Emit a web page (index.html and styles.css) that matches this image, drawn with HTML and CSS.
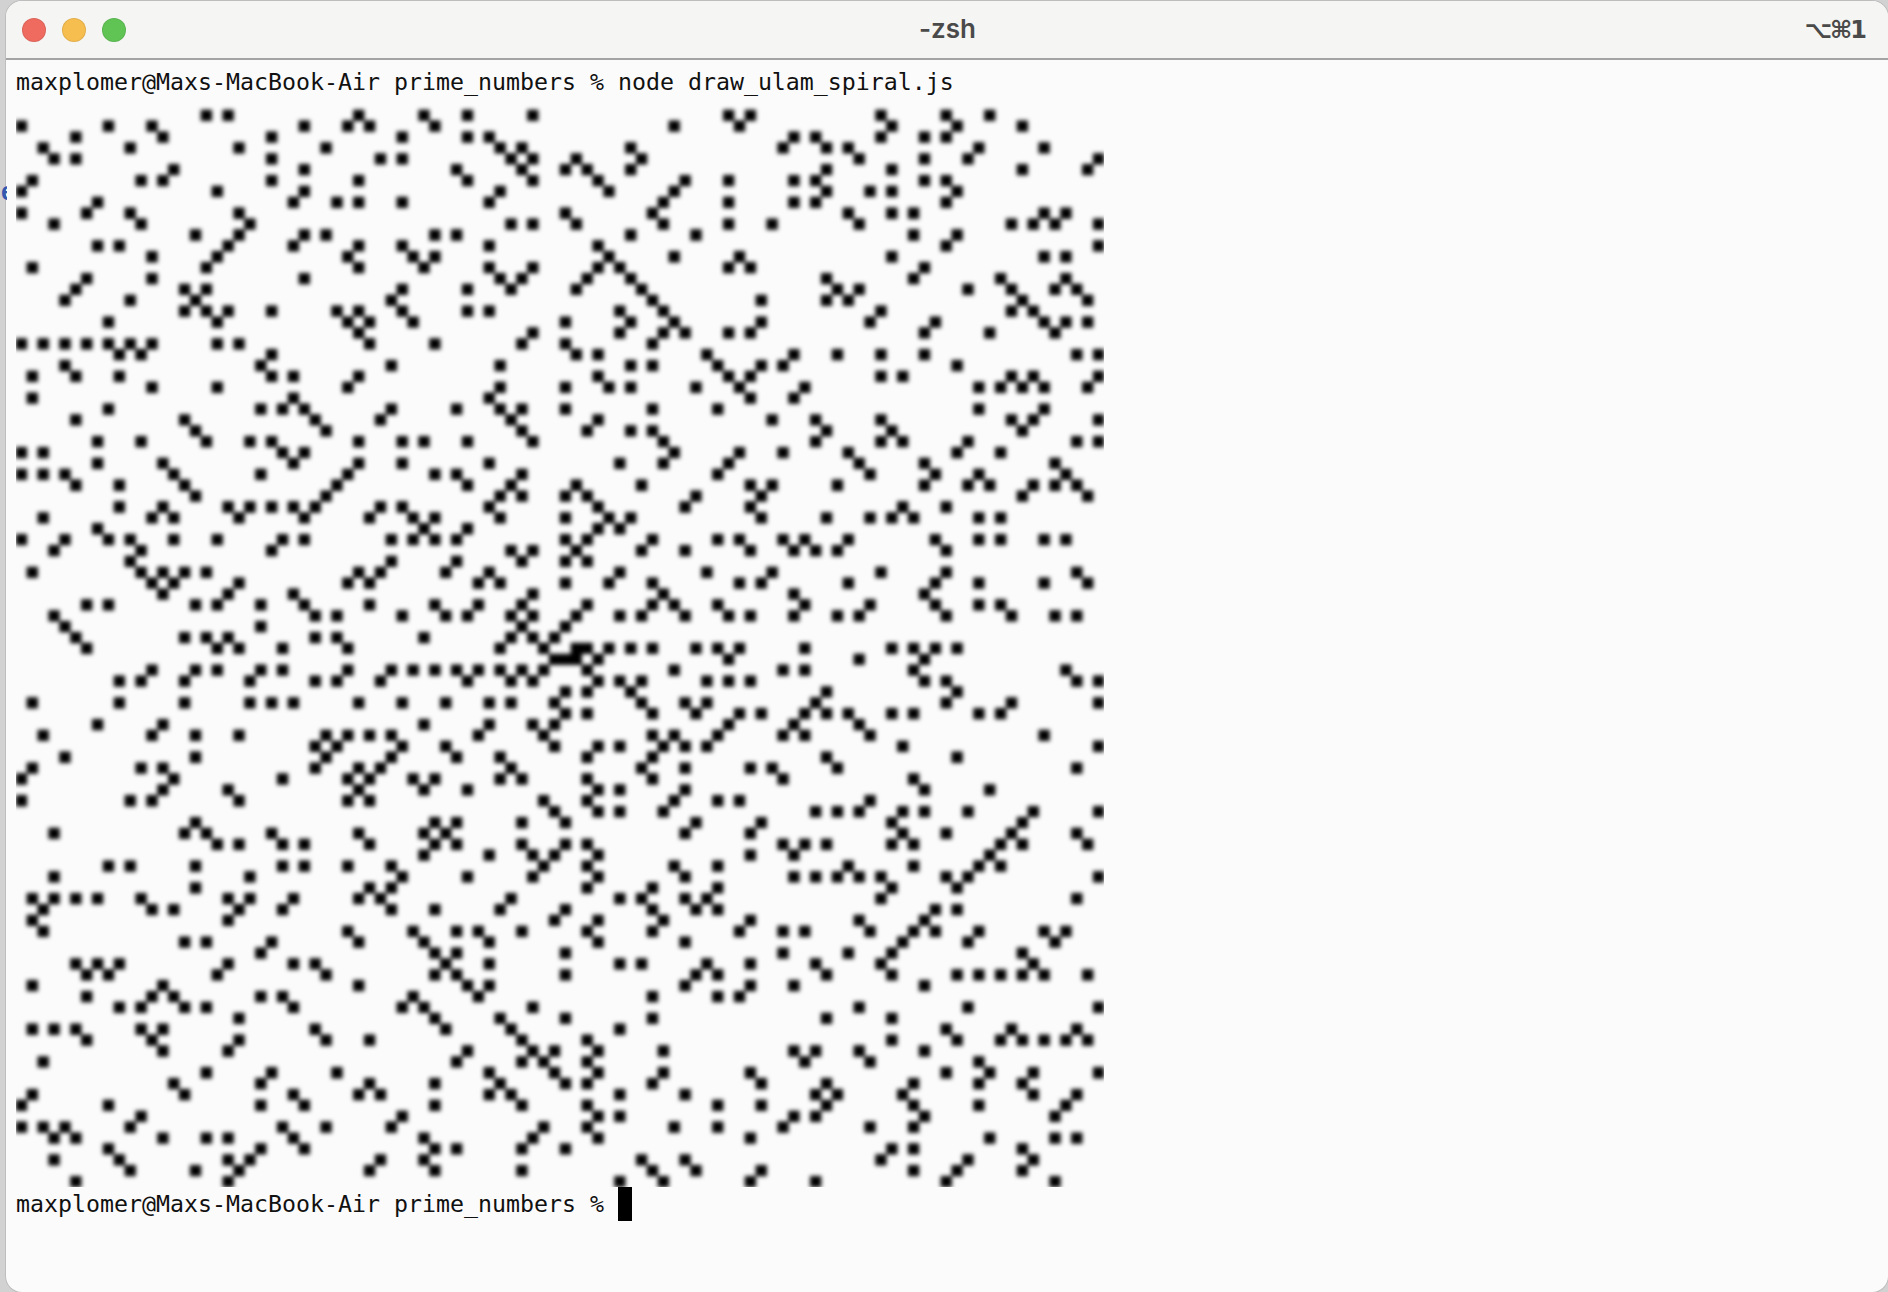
FILE: index.html
```html
<!DOCTYPE html>
<html lang="en">
<head>
<meta charset="utf-8">
<title>-zsh</title>
<link rel="stylesheet" href="styles.css">
</head>
<body>
<span class="desktop-glyph">e</span>
<main class="window">
  <header class="titlebar">
    <div class="lights">
      <span class="light light-close"></span>
      <span class="light light-min"></span>
      <span class="light light-max"></span>
    </div>
    <h1 class="title">-zsh</h1>
    <div class="shortcut">⌥⌘1</div>
  </header>
  <section class="terminal">
    <div class="line">maxplomer@Maxs-MacBook-Air prime_numbers % node draw_ulam_spiral.js</div>
    <canvas class="spiral" id="spiral" width="1088" height="1088"></canvas>
    <div class="line">maxplomer@Maxs-MacBook-Air prime_numbers % <span class="cursor"></span></div>
  </section>
</main>
<script src="spiral.js"></script>
</body>
</html>
```
FILE: styles.css
```css
html, body {
  margin: 0;
  height: 100%;
}
body {
  background: #d2d2d2;
  overflow: hidden;
  padding: 1px 0 0 6px;
  box-sizing: border-box;
  position: relative;
}
.desktop-glyph {
  position: absolute;
  left: 1px;
  top: 177px;
  width: 6px;
  overflow: hidden;
  z-index: 2;
  font: bold 25px "Liberation Sans", sans-serif;
  color: #3457b0;
}
.window {
  height: 100%;
  display: flex;
  flex-direction: column;
  background: #fbfbfb;
  border-radius: 16px;
  overflow: hidden;
  box-shadow: 0 0 0 1px #bdbdbd;
}
.titlebar {
  height: 57px;
  flex: none;
  display: flex;
  align-items: center;
  position: relative;
  background: #f5f5f3;
  border-bottom: 2px solid #a3a3a3;
  padding: 0 22px 0 16px;
}
.lights {
  display: flex;
  gap: 16px;
}
.light {
  width: 24px;
  height: 24px;
  border-radius: 50%;
  box-sizing: border-box;
  border: 1px solid rgba(0, 0, 0, 0.08);
}
.light-close { background: #ef6b60; }
.light-min { background: #f6bd4f; }
.light-max { background: #60c455; }
.title {
  position: absolute;
  left: 0;
  right: 0;
  margin: 0;
  padding: 0 0 2px 1px;
  text-align: center;
  font: 600 26px "Inter", sans-serif;
  color: #4a4a4a;
}
.shortcut {
  margin-left: auto;
  margin-right: 1px;
  font: bold 24px "DejaVu Sans", sans-serif;
  letter-spacing: -2px;
  color: #4a4a4a;
}
.terminal {
  flex: 1;
  padding: 5px 0 0 10px;
}
.line {
  height: 34px;
  font: 23.25px/34px "DejaVu Sans Mono", monospace;
  color: #111;
  white-space: pre;
  display: flex;
}
.spiral {
  display: block;
  width: 1088px;
  height: 1088px;
}
.cursor {
  display: block;
  width: 14px;
  height: 34px;
  background: #000;
}
```
FILE: spiral.js
```js
// Ulam spiral, 100 x 100 cells, clockwise from the centre.
var canvas = document.getElementById('spiral');
var ctx = canvas.getContext('2d');
var CELLS = 100;
var SIZE = canvas.width / CELLS;
var LIMIT = 10100;
var GROW = 0.2;

function isMarked(n) {
  if (n < 2) return false;
  if (n === 4) return true; // the program's test lets 4 through as well as the primes
  for (var i = 2; i * i <= n; i++) {
    if (n % i === 0) return false;
  }
  return true;
}

ctx.filter = 'blur(2px)';
ctx.fillStyle = '#000';
ctx.beginPath();
var x = 0, y = 0, dx = 1, dy = 0, run = 1, n = 1;
while (n <= LIMIT) {
  for (var leg = 0; leg < 2; leg++) {
    for (var s = 0; s < run && n <= LIMIT; s++) {
      if (isMarked(n)) {
        var cx = x + 50, cy = y + 50;
        if (cx >= 0 && cx < CELLS && cy >= 0 && cy < CELLS) {
          ctx.rect(cx * SIZE - GROW, cy * SIZE - GROW, SIZE + 2 * GROW, SIZE + 2 * GROW);
        }
      }
      x += dx; y += dy; n++;
    }
    var t = dx; dx = -dy; dy = t;
  }
  run++;
}
ctx.fill();
```
